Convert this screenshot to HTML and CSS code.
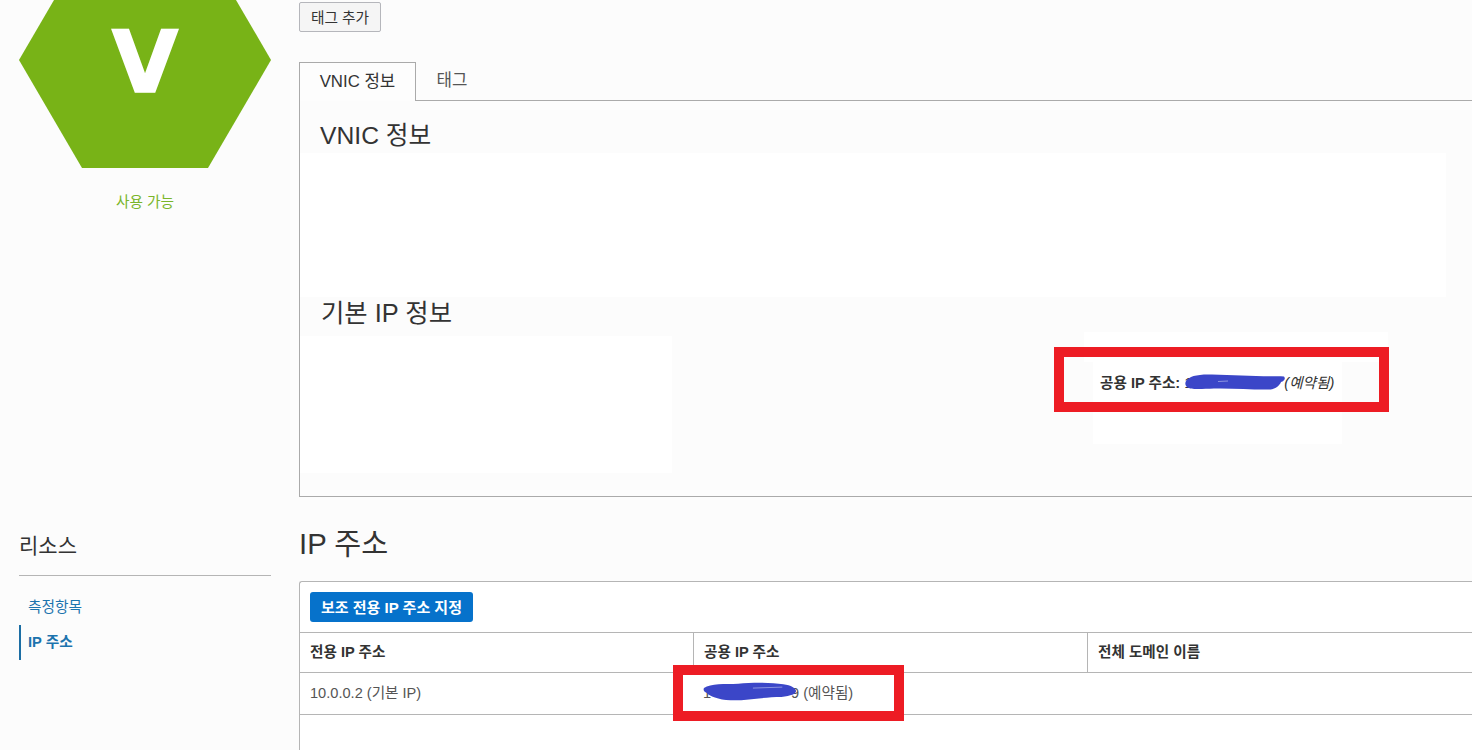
FILE: index.html
```html
<!DOCTYPE html>
<html lang="ko">
<head>
<meta charset="utf-8">
<title>VNIC 정보</title>
<link rel="stylesheet" href="styles.css">
</head>
<body>
<div class="page">
  <aside class="side">
    <div class="status">
      <svg class="hex" viewBox="0 0 252 216" width="252" height="216">
        <polygon points="0,108 63,0 189,0 252,108 189,216 63,216" fill="#78b317"/>
        <text x="126" y="139.500" text-anchor="middle" class="hex-letter">V</text>
      </svg>
      <div class="status-label">사용 가능</div>
    </div>
    <nav class="resources">
      <h2 class="resources-title">리소스</h2>
      <ul class="resources-list">
        <li class="resources-item"><a class="resources-link">측정항목</a></li>
        <li class="resources-item is-active"><a class="resources-link">IP 주소</a></li>
      </ul>
    </nav>
  </aside>

  <main class="main">
    <button class="btn">태그 추가</button>

    <div class="tabs">
      <div class="tab is-active">VNIC 정보</div>
      <div class="tab">태그</div>
      <div class="tab-fill"></div>
    </div>
    <section class="panel">
      <h2 class="panel-heading first">VNIC 정보</h2>
      <div class="white-block vnic-block"></div>
      <h2 class="panel-heading second">기본 IP 정보</h2>
      <div class="ip-row">
        <div class="white-block ip-left"></div>
        <div class="ip-right">
          <div class="white-block ip-cap"></div>
          <div class="white-block ip-foot"></div>
          <div class="ip-line">
            <strong class="ip-label">공용 IP 주소:</strong> <span class="masked">1<svg class="scribble scribble-a" viewBox="0 0 102 16" width="102" height="16"><path d="M2 7C5 2 14 0 28 0.500L72 2C82 2.500 92 2 100 2.500C102 5 100 7 97 8C96 11 92 15 86 15.500C70 16 50 14 30 14.500C18 15 6 16 3 13C1 11 1 9 2 7Z" fill="#3b46c8"/><path d="M34 7.500L44 7" stroke="#8d94e0" fill="none"/></svg></span><em class="ip-note">(예약됨)</em>
          </div>
          <span class="red-box box-a"></span>
        </div>
      </div>
    </section>

    <h1 class="section-title">IP 주소</h1>
    <section class="card">
      <div class="toolbar"><button class="btn-primary">보조 전용 IP 주소 지정</button></div>
      <div class="row head">
        <div class="cell">전용 IP 주소</div>
        <div class="cell">공용 IP 주소</div>
        <div class="cell">전체 도메인 이름</div>
      </div>
      <div class="row body-row">
        <div class="cell">10.0.0.2 (기본 IP)</div>
        <div class="cell"><span class="masked wide">1<svg class="scribble scribble-b" viewBox="0 0 96 20" width="94" height="20"><path d="M1 6C8 1 22 2 36 1.500C50 0 70 0 82 2C90 3 95 6 95 9C95 12 90 14 80 15C62 15 46 19 28 18.500C16 18 6 14 4 11C1 10 0 8 1 6Z" fill="#3b46c8"/><path d="M51 6L81 5" stroke="#8d94e0" fill="none"/></svg></span>9 (예약됨)</div>
        <div class="cell"></div>
        <span class="red-box box-b"></span>
      </div>
    </section>
  </main>
</div>
</body>
</html>
```
FILE: styles.css
```css
* { box-sizing: border-box; }
html, body { margin: 0; height: 750px; overflow: hidden; background: #fcfcfc; }
body { font-family: "Liberation Sans", "Noto Sans CJK KR", sans-serif; color: #333; font-size: 14.6px; }
h1, h2 { margin: 0; font-weight: 400; }
ul { margin: 0; padding: 0; list-style: none; }

.page { display: flex; gap: 28px; padding-left: 19px; width: 1472px; height: 750px; overflow: hidden; }
.side { flex: 0 0 252px; display: flex; flex-direction: column; }
.status { margin-top: -48px; height: 580px; text-align: center; }
.hex { display: block; }
.hex-letter { font-family: "DejaVu Sans", sans-serif; font-weight: 700; font-size: 86px; fill: #fff; stroke: #fff; stroke-width: 1.5px; }
.status-label { margin-top: 24px; font-size: 14.7px; line-height: 20px; color: #7ab52a; }

.resources-title { font-size: 21px; line-height: 28px; color: #333; padding-bottom: 15px; border-bottom: 1px solid #b5b5b5; }
.resources-list { padding-top: 14px; }
.resources-item { height: 35px; padding-left: 7px; border-left: 2px solid transparent; font-size: 14.7px; line-height: 35px; color: #1c74ae; }
.resources-link { color: inherit; }
.is-active .resources-link { font-weight: 700; }
.resources-item.is-active { border-left-color: #1c6ea4; }

.main { flex: 0 0 1300px; padding-top: 2px; }
.btn { display: block; height: 30px; width: 82px; padding: 0 0 2px; border: 1px solid #b5b6bb; border-radius: 2px; background: #f5f5f5; color: #333; font: inherit; font-size: 14.7px; }
.tabs { display: flex; height: 39px; margin-top: 30px; }
.tab { width: 72px; font-size: 16.8px; line-height: 38px; text-align: center; color: #555; border-bottom: 1px solid #aaa; }
.tab.is-active { width: 117px; background: #fdfdfd; color: #333; border: 1px solid #aaa; border-bottom: 0; }
.tab-fill { flex: 1; border-bottom: 1px solid #aaa; }
.panel { height: 396px; border-left: 1px solid #aaa; border-bottom: 1px solid #aaa; }
.panel-heading { font-size: 24.7px; line-height: 32px; padding-left: 20px; color: #333; }
.panel-heading.first { padding-top: 19px; height: 52px; }
.panel-heading.second { height: 39px; padding-left: 21px; font-size: 25.4px; line-height: 32px; }
.white-block { background: #fff; }
.vnic-block { width: 1146px; height: 144px; }
.ip-row { display: flex; align-items: flex-start; }
.ip-left { width: 372px; height: 137px; }
.ip-right { position: relative; width: 304px; height: 112px; margin-top: -4px; margin-left: 412px; }
.ip-cap { height: 30px; }
.ip-foot { width: 249px; height: 82px; margin-left: 9px; }
.ip-line { position: absolute; left: 16px; top: 42px; white-space: nowrap; line-height: 18px; }
.ip-label { font-weight: 700; }
.ip-note { color: #333; margin-left: 1px; }
.masked { position: relative; display: inline-block; width: 99px; }
.masked.wide { width: 88px; }
.scribble { position: absolute; }
.scribble-a { left: 0; top: 0; }
.scribble-b { left: 0; top: 9px; }
.red-box { position: absolute; border: 10px solid #ed1c24; pointer-events: none; }
.box-a { left: -30px; top: 15px; width: 335px; height: 65px; }
.box-b { left: 373px; top: -8px; width: 231px; height: 56px; }

.section-title { font-size: 29.3px; line-height: 36px; margin-top: 29px; color: #333; }
.card { margin-top: 19px; border: 1px solid #b5b5b5; border-right: 0; border-top-left-radius: 3px; background: #fff; height: 300px; }
.toolbar { padding: 10px; height: 51px; border-bottom: 1px solid #b5b5b5; }
.btn-primary { display: block; height: 30px; width: 163px; padding: 0 0 2px; border: 0; border-radius: 3px; background: #0672cb; color: #fff; font: inherit; font-weight: 700; font-size: 15px; }
.row { position: relative; display: grid; grid-template-columns: 393px 394px 1fr; border-bottom: 1px solid #b5b5b5; }
.row.head { height: 40px; font-weight: 700; line-height: 38px; }
.row.head .cell + .cell { border-left: 1px solid #b5b5b5; }
.row.body-row { height: 42px; line-height: 41px; color: #555; }
.cell { padding-left: 10px; white-space: nowrap; }
```
